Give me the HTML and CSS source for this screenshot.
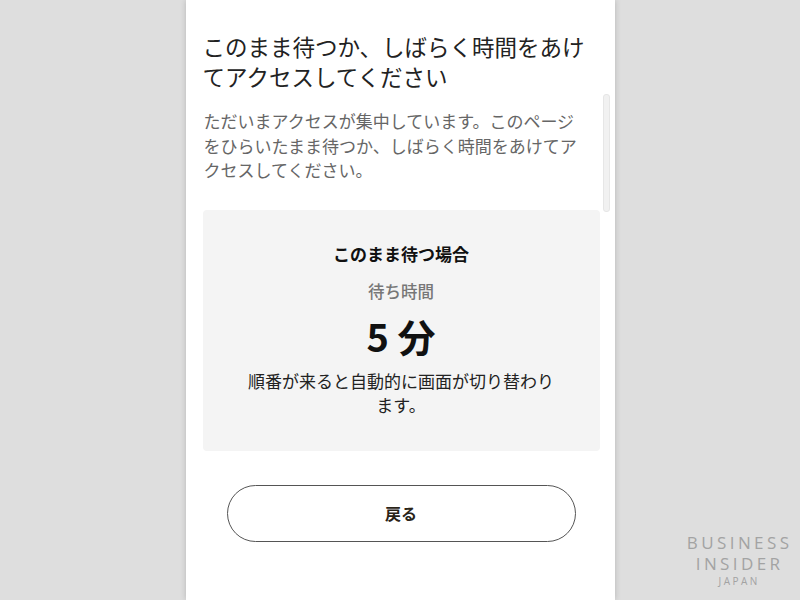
FILE: index.html
```html
<!DOCTYPE html>
<html lang="ja">
  <head>
    <meta charset="UTF-8" />
    <meta name="viewport" content="width=device-width, initial-scale=1.0" />
    <title>アクセス集中</title>
    <link rel="stylesheet" href="styles.css">
  </head>
  <body>
    <div class="screen">
      <div class="scroll-thumb"></div>
      <h1 class="title">このまま待つか、しばらく時間をあけてアクセスしてください</h1>
      <p class="lead">ただいまアクセスが集中しています。このページをひらいたまま待つか、しばらく時間をあけてアクセスしてください。</p>

      <div class="wait-card">
        <div class="wait-head">このまま待つ場合</div>
        <div class="wait-label">待ち時間</div>
        <div class="wait-time">5 分</div>
        <div class="wait-note">順番が来ると自動的に画面が切り替わります。</div>
      </div>

      <button class="back-btn" type="button">戻る</button>
    </div>

    <!-- watermark -->
    <div class="brand">
      <div class="brand-main">BUSINESS</div>
      <div class="brand-main">INSIDER</div>
      <div class="brand-sub">JAPAN</div>
    </div>
  </body>
</html>
```

FILE: styles.css
```css
body {
  font-family: "Noto Sans CJK JP", "Noto Sans", sans-serif;
  display: flex;
  justify-content: center;
  height: 100vh;
  margin: 0;
  background-color: #dedede;
  overflow: hidden;
}
.screen {
  position: relative;
  width: 429px;
  box-sizing: border-box;
  padding: 31px 15px 0 17px;
  background-color: #fff;
  box-shadow: 0 0 6px rgba(0, 0, 0, 0.18);
}
.scroll-thumb {
  position: absolute;
  top: 94px;
  right: 5px;
  width: 5px;
  height: 116px;
  border-radius: 3px;
  background-color: #f1f1f1;
  border: 1px solid #e6e6e6;
}
.title {
  margin: 0 10px 0 0;
  font-size: 22.5px;
  font-weight: 400;
  line-height: 30px;
  color: #222;
}
.lead {
  margin: 18px 10px 0 1px;
  font-size: 17px;
  line-height: 24.5px;
  color: #666;
}
.wait-card {
  margin-top: 27px;
  padding: 32px 38px 34px;
  border-radius: 4px;
  background-color: #f4f4f4;
  text-align: center;
}
.wait-head {
  font-size: 17px;
  font-weight: 700;
  line-height: 24px;
  color: #111;
}
.wait-label {
  margin-top: 13px;
  font-size: 16.5px;
  font-weight: 500;
  line-height: 24px;
  color: #777;
}
.wait-time {
  margin-top: 8px;
  font-size: 38px;
  font-weight: 700;
  line-height: 50px;
  color: #111;
}
.wait-note {
  margin-top: 8px;
  font-size: 17px;
  line-height: 24px;
  color: #222;
}
.back-btn {
  display: block;
  width: 349px;
  height: 57px;
  margin: 34px auto 0;
  border: 1.5px solid #555;
  border-radius: 29px;
  background-color: #fff;
  font-family: inherit;
  font-size: 16px;
  font-weight: 700;
  color: #2a2418;
}
.brand {
  position: absolute;
  right: 11px;
  bottom: 11px;
  text-align: center;
  color: #a3a3a3;
  font-family: "Open Sans", sans-serif;
}
.brand-main {
  font-size: 17px;
  line-height: 21px;
  letter-spacing: 3.4px;
  margin-right: -3.4px;
}
.brand-sub {
  font-size: 10px;
  line-height: 15px;
  letter-spacing: 2.5px;
  margin-right: -2.5px;
}
```
